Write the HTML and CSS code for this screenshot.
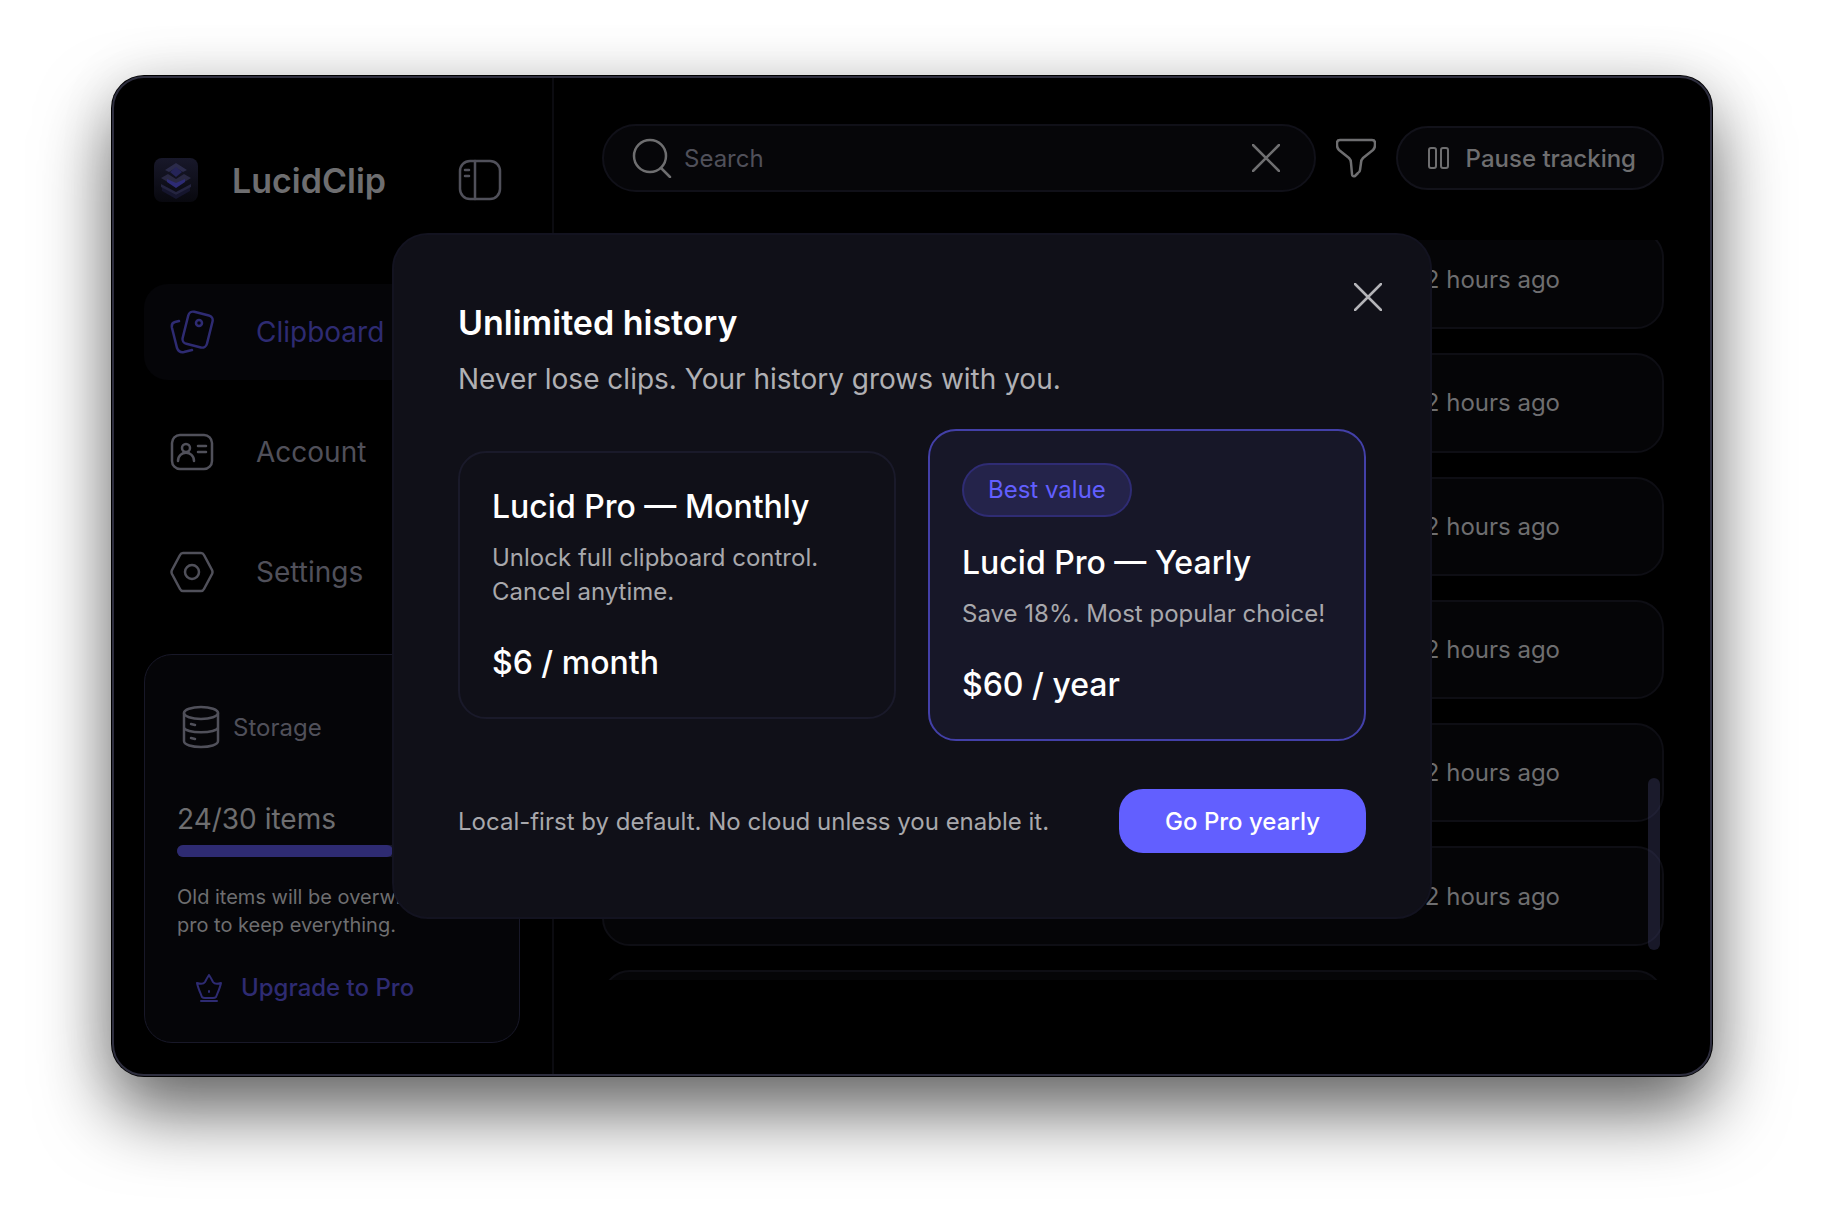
FILE: index.html
```html
<!DOCTYPE html>
<html lang="en">
<head>
    <meta charset="UTF-8">
    <title>LucidClip</title>
    <link rel="stylesheet" href="styles.css">
</head>
<body>

    <div class="window">
        <aside class="sidebar">
            <div class="brand">
                <svg class="logo" viewBox="0 0 44 44">
                    <defs>
                        <linearGradient id="logoBg" x1="0" y1="0" x2="0" y2="1">
                            <stop offset="0" stop-color="#18182a"/>
                            <stop offset="1" stop-color="#08080e"/>
                        </linearGradient>
                    </defs>
                    <rect width="44" height="44" rx="8" fill="url(#logoBg)"/>
                    <path d="M8 29l14 8 14-8v4l-14 8-14-8z" fill="#15152d"/>
                    <path d="M22 5l11 7-4 2-7-4-7 4-4-2z" fill="#2b2b4a"/>
                    <path d="M22 9l6 5-6 5-6-5z" fill="#252458"/>
                    <path d="M7 20l7-4 8 5 8-5 7 4-15 9z" fill="#292842"/>
                    <path d="M13 21l9 4 9-4v3l-9 6-9-6z" fill="#2d2b75"/>
                    <path d="M7 26l15 8 15-8v3l-15 8-15-8z" fill="#242440"/>
                </svg>
                <span class="brand-name">LucidClip</span>
                <button class="icon-btn" aria-label="Toggle sidebar">
                    <svg class="icon" viewBox="0 0 44 44">
                        <rect x="2" y="3" width="40" height="38" rx="10"/>
                        <path d="M17 3v38M7 12h4M7 18h4"/>
                    </svg>
                </button>
            </div>

            <nav class="nav">
                <a href="#" class="nav-item active">
                    <svg class="icon" viewBox="0 0 44 44">
                        <rect x="15" y="3" width="25" height="33" rx="5" transform="rotate(14 27 20)"/>
                        <circle cx="29" cy="13" r="3"/>
                        <path d="M9 11L5 12Q1 13 2 18L7 38Q9 43 14 42L22 40"/>
                    </svg>
                    <span>Clipboard</span>
                </a>
                <a href="#" class="nav-item">
                    <svg class="icon" viewBox="0 0 44 44">
                        <rect x="2" y="5" width="40" height="34" rx="8"/>
                        <circle cx="16" cy="18" r="4"/>
                        <path d="M8 31c0-11 16-11 16 0M28 16h8M28 22h8"/>
                    </svg>
                    <span>Account</span>
                </a>
                <a href="#" class="nav-item">
                    <svg class="icon" viewBox="0 0 44 44">
                        <path d="M13 3h18q2 0 3 2l8 15q1 2 0 4l-8 15q-1 2-3 2H13q-2 0-3-2L2 24q-1-2 0-4L10 5q1-2 3-2z"/>
                        <circle cx="22" cy="22" r="7"/>
                    </svg>
                    <span>Settings</span>
                </a>
            </nav>

            <section class="storage">
                <div class="storage-head">
                    <svg class="icon" viewBox="0 0 44 44">
                        <ellipse cx="24" cy="8" rx="17" ry="6"/>
                        <path d="M7 8v28c0 8 34 8 34 0V8M7 22c0 7 34 7 34 0M14 19l4 1M14 33l4 1"/>
                    </svg>
                    <span>Storage</span>
                </div>
                <div class="storage-count">24/30 items</div>
                <div class="bar"><div class="bar-fill" style="width: 80%"></div></div>
                <p class="storage-note">Old items will be overwritten. Go pro to keep everything.</p>
                <button class="upgrade">
                    <svg class="icon" viewBox="0 0 28 28">
                        <path d="M14 1c2 3 3 5 4 7 2 3 5 2 8 1-1 5-3 9-5 14-1 1-2 1-3 1h-8c-1 0-2 0-3-1C5 18 3 14 2 9c3 1 6 2 8-1 1-2 2-4 4-7zM6 27h16M14 17v1"/>
                    </svg>
                    <span>Upgrade to Pro</span>
                </button>
            </section>
        </aside>

        <main class="main">
            <div class="toolbar">
                <div class="search">
                    <svg class="icon search-icon" viewBox="0 0 40 40">
                        <circle cx="18" cy="18" r="16"/>
                        <path d="M29 30l9 9"/>
                    </svg>
                    <input type="text" placeholder="Search" aria-label="Search">
                    <button class="icon-btn" aria-label="Clear search">
                        <svg class="icon cross" viewBox="0 0 28 28"><path d="M1 1l26 26M27 1L1 27"/></svg>
                    </button>
                </div>
                <button class="icon-btn filter" aria-label="Filter">
                    <svg class="icon" viewBox="0 0 40 40">
                        <path d="M4 2h32q3 0 3 3v2q0 3-2 5L27 20q-2 2-2 5l-1 7q0 2-2 3l-3 3q-3 1-3-2l-1-11q0-3-2-5L3 12Q1 10 1 7V5q0-3 3-3z"/>
                    </svg>
                </button>
                <button class="pause">
                    <svg class="icon" viewBox="0 0 22 22">
                        <rect x="1" y="1" width="7" height="20" rx="2"/>
                        <rect x="13" y="1" width="7" height="20" rx="2"/>
                    </svg>
                    <span>Pause tracking</span>
                </button>
            </div>

            <div class="list-wrap">
                <ul class="list">
                    <li>2 hours ago</li>
                    <li>2 hours ago</li>
                    <li>2 hours ago</li>
                    <li>2 hours ago</li>
                    <li>2 hours ago</li>
                    <li>2 hours ago</li>
                    <li></li>
                </ul>
                <div class="scroll-thumb"></div>
            </div>
        </main>

        <div class="overlay">
            <div class="modal" role="dialog" aria-labelledby="modalTitle">
                <button class="icon-btn close" aria-label="Close">
                    <svg class="icon cross" viewBox="0 0 28 28"><path d="M1 1l26 26M27 1L1 27"/></svg>
                </button>
                <h2 id="modalTitle">Unlimited history</h2>
                <p class="subtitle">Never lose clips. Your history grows with you.</p>

                <div class="plans">
                    <div class="plan">
                        <h3>Lucid Pro — Monthly</h3>
                        <p>Unlock full clipboard control. Cancel anytime.</p>
                        <div class="price">$6 / month</div>
                    </div>
                    <div class="plan selected">
                        <span class="tag">Best value</span>
                        <h3>Lucid Pro — Yearly</h3>
                        <p>Save 18%. Most popular choice!</p>
                        <div class="price">$60 / year</div>
                    </div>
                </div>

                <div class="modal-foot">
                    <span>Local-first by default. No cloud unless you enable it.</span>
                    <button class="go-pro">Go Pro yearly</button>
                </div>
            </div>
        </div>
    </div>

</body>
</html>
```
FILE: styles.css
```css
* {
    box-sizing: border-box;
}

body {
    display: flex;
    height: 100vh;
    margin: 0;
    padding: 76px 112px 148px;
    background-color: #fff;
    font-family: Inter, "Liberation Sans", sans-serif;
    font-size: 24px;
    color: #6e6e70;
}

h2, h3, p, ul {
    margin: 0;
    padding: 0;
}

button {
    padding: 0;
    border: none;
    background: none;
    color: inherit;
    font: inherit;
    cursor: pointer;
}

.icon {
    display: block;
    flex: none;
    width: 44px;
    height: 44px;
    fill: none;
    stroke: currentColor;
    stroke-width: 2.5;
    stroke-linecap: round;
    stroke-linejoin: round;
}

.window {
    position: relative;
    display: flex;
    flex: 1;
    min-width: 0;
    border: 2px solid #2e2e3e;
    border-radius: 32px;
    background-color: #000;
    box-shadow: 0 0 0 1px #000, 0 36px 72px rgba(0, 0, 0, 0.6), 0 0 60px rgba(0, 0, 0, 0.08);
    overflow: hidden;
}

/* sidebar */
.sidebar {
    display: flex;
    flex: none;
    flex-direction: column;
    width: 440px;
    padding: 80px 32px 30px 30px;
    border-right: 2px solid #0b0b10;
}

.brand {
    display: flex;
    align-items: center;
    padding: 0 18px 0 10px;
    height: 44px;
}

.logo {
    width: 44px;
    height: 44px;
}

.brand-name {
    flex: 1;
    margin-left: 34px;
    font-size: 34px;
    font-weight: 600;
}

.icon-btn {
    color: #50505a;
}

.nav {
    display: flex;
    flex-direction: column;
    gap: 24px;
    margin-top: 82px;
}

.nav-item {
    display: flex;
    align-items: center;
    gap: 42px;
    height: 96px;
    padding: 0 26px;
    border-radius: 24px;
    color: #50505a;
    font-size: 28px;
    text-decoration: none;
}

.nav-item.active {
    background-color: #050508;
    color: #2e2b72;
}

.storage {
    margin-top: 34px;
    padding: 50px 32px 40px;
    border: 1px solid #181828;
    border-radius: 28px;
    background-color: #050508;
}

.storage-head {
    display: flex;
    align-items: center;
    gap: 12px;
    color: #50505a;
}

.storage-count {
    margin-top: 52px;
    font-size: 28px;
    line-height: 36px;
}

.bar {
    height: 12px;
    margin: 8px 40px 0 0;
    border-radius: 6px;
    background-color: #181828;
}

.bar-fill {
    height: 100%;
    border-radius: 6px;
    background-color: #2e2b72;
}

.storage-note {
    margin-top: 26px;
    font-size: 20px;
    line-height: 28px;
}

.upgrade {
    display: flex;
    align-items: center;
    gap: 18px;
    margin-top: 34px;
    padding-left: 18px;
    color: #2e2b72;
    font-weight: 500;
}

.upgrade .icon {
    width: 28px;
    height: 28px;
    stroke-width: 2;
}

/* main column */
.main {
    display: flex;
    flex: 1;
    flex-direction: column;
    min-width: 0;
    padding: 46px 46px 94px 48px;
}

.toolbar {
    display: flex;
    align-items: center;
}

.search {
    display: flex;
    flex: 1;
    align-items: center;
    min-width: 0;
    height: 68px;
    padding: 0 34px 0 28px;
    border: 2px solid #101018;
    border-radius: 34px;
    background-color: #060609;
}

.search-icon {
    width: 40px;
    height: 40px;
    color: #6e6e70;
}

.search input {
    flex: 1;
    min-width: 0;
    margin-left: 12px;
    padding: 0;
    border: none;
    outline: none;
    background: none;
    color: #6e6e70;
    font: inherit;
}

.search input::placeholder {
    color: #50505a;
}

.cross {
    width: 28px;
    height: 28px;
}

.search .icon-btn,
.filter {
    color: #6e6e70;
}

.filter {
    margin: 0 20px;
}

.filter .icon {
    width: 40px;
    height: 40px;
}

.pause {
    display: flex;
    align-items: center;
    gap: 16px;
    height: 64px;
    padding: 0 26px 0 30px;
    border: 2px solid #12121a;
    border-radius: 32px;
    background-color: #060609;
    font-weight: 500;
}

.pause .icon {
    width: 22px;
    height: 22px;
    stroke-width: 2;
}

.list-wrap {
    position: relative;
    flex: 1;
    min-height: 0;
    margin-top: 48px;
    overflow: hidden;
}

.list {
    display: grid;
    grid-auto-rows: 1fr;
    gap: 24px;
    height: 839px;
    margin-top: -10px;
    list-style: none;
}

.list li {
    display: flex;
    align-items: center;
    justify-content: flex-end;
    padding-right: 102px;
    border: 2px solid #0e0e14;
    border-radius: 28px;
    background-color: #050507;
}

.scroll-thumb {
    position: absolute;
    right: 4px;
    bottom: 30px;
    width: 12px;
    height: 172px;
    border-radius: 6px;
    background-color: rgba(60, 60, 100, 0.4);
}

/* upgrade dialog */
.overlay {
    position: absolute;
    inset: 0;
    display: grid;
    place-items: center;
}

.modal {
    position: relative;
    width: 90%;
    max-width: 1040px;
    padding: 64px;
    border: 2px solid #131320;
    border-radius: 36px;
    background-color: #101018;
    color: #a8a8ac;
}

.close {
    position: absolute;
    top: 48px;
    right: 48px;
    color: #b4b4b8;
}

.modal h2 {
    color: #fff;
    font-size: 34px;
    font-weight: 600;
    line-height: 48px;
}

.subtitle {
    margin-top: 12px;
    color: #b0b0b4;
    font-size: 28px;
    line-height: 40px;
}

.plans {
    display: grid;
    grid-template-columns: 1fr 1fr;
    align-items: center;
    gap: 32px;
    margin-top: 30px;
}

.plan {
    padding: 32px;
    border: 2px solid #1a1a2a;
    border-radius: 28px;
}

.plan.selected {
    border-color: #4340a8;
    background-color: #171728;
}

.plan h3,
.price {
    color: #fff;
    font-size: 32px;
    font-weight: 500;
    line-height: 44px;
}

.plan p {
    margin-top: 12px;
    line-height: 34px;
}

.price {
    margin-top: 32px;
}

.tag {
    display: block;
    width: fit-content;
    margin-bottom: 24px;
    padding: 8px 24px;
    border: 2px solid #2f2c74;
    border-radius: 28px;
    background-color: #24234a;
    color: #625fff;
    line-height: 34px;
}

.modal-foot {
    display: flex;
    align-items: center;
    justify-content: space-between;
    margin-top: 48px;
}

.go-pro {
    height: 64px;
    padding: 0 46px;
    border-radius: 24px;
    background-color: #625fff;
    color: #fff;
    font-weight: 500;
}
```
